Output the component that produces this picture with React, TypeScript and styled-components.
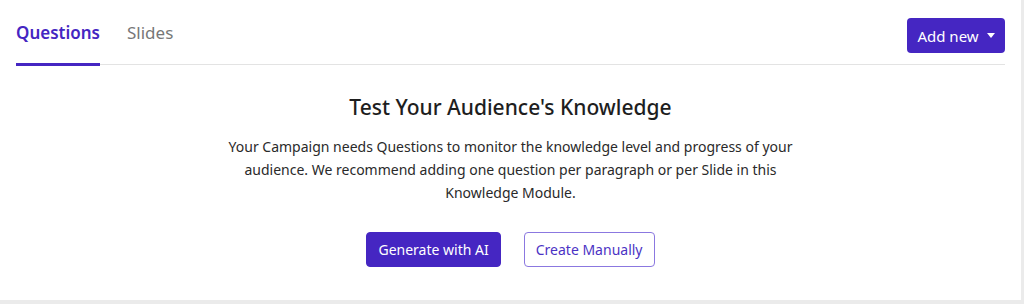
import React from "react";
import styled, { createGlobalStyle } from "styled-components";

const GlobalStyle = createGlobalStyle`
  body {
    margin: 0;
    background: #ebebeb;
    font-family: "Noto Sans", "Open Sans", sans-serif;
    color: #212529;
  }
`;

const accent = "#4526c2";

export default function App() {
  return (
    <>
      <GlobalStyle />
      <Card>
        <Header>
          <Tabs>
            <Tab active>Questions</Tab>
            <Tab>Slides</Tab>
          </Tabs>
          <AddButton>
            Add new <Caret />
          </AddButton>
        </Header>

        <Empty>
          <Title>Test Your Audience's Knowledge</Title>
          <Body>
            Your Campaign needs Questions to monitor the knowledge level and progress of your
            audience. We recommend adding one question per paragraph or per Slide in this
            Knowledge Module.
          </Body>
          <Actions>
            <Button variant="solid">Generate with AI</Button>
            <Button variant="outline">Create Manually</Button>
          </Actions>
        </Empty>
      </Card>
    </>
  );
}

const Card = styled.div`
  width: 1021px;
  height: 300px;
  background: #fff;
  box-sizing: border-box;
  padding: 0 16px;
`;

const Header = styled.div`
  display: flex;
  align-items: flex-start;
  justify-content: space-between;
  border-bottom: 1px solid #e3e3e3;
  height: 65px;
  box-sizing: border-box;
`;

const Tabs = styled.div`
  display: flex;
  gap: 27px;
  height: 100%;
`;

const Tab = styled.div<{ active?: boolean }>`
  font-size: 17px;
  font-weight: ${(p) => (p.active ? 600 : 400)};
  color: ${(p) => (p.active ? accent : "#777")};
  padding-top: 21px;
  box-sizing: border-box;
  border-bottom: 3px solid ${(p) => (p.active ? accent : "transparent")};
  margin-bottom: -1px;
  height: 66px;
`;

const AddButton = styled.button`
  margin-top: 18px;
  height: 35px;
  width: 98px;
  border: none;
  border-radius: 4px;
  background: ${accent};
  color: #fff;
  font-family: inherit;
  font-size: 15px;
  display: flex;
  align-items: center;
  justify-content: center;
  gap: 8px;
  padding: 0;
`;

const Caret = styled.span`
  width: 0;
  height: 0;
  border-left: 4.5px solid transparent;
  border-right: 4.5px solid transparent;
  border-top: 5px solid #fff;
`;

const Empty = styled.div`
  display: flex;
  flex-direction: column;
  align-items: center;
  text-align: center;
  padding-top: 28px;
`;

const Title = styled.h2`
  margin: 0;
  font-size: 21px;
  font-weight: 500;
  line-height: 28px;
  color: #1e1e1e;
`;

const Body = styled.p`
  margin: 14px 0 0;
  width: 580px;
  font-size: 14px;
  line-height: 23px;
  color: #2a2a2a;
`;

const Actions = styled.div`
  display: flex;
  gap: 23px;
  margin-top: 28px;
`;

const Button = styled.button<{ variant: "solid" | "outline" }>`
  height: 35px;
  padding: 0 11px;
  border-radius: 4px;
  font-family: inherit;
  font-size: 14px;
  border: 1px solid ${(p) => (p.variant === "solid" ? accent : "#8b78e0")};
  background: ${(p) => (p.variant === "solid" ? accent : "#fff")};
  color: ${(p) => (p.variant === "solid" ? "#fff" : "#4b33c4")};
`;
